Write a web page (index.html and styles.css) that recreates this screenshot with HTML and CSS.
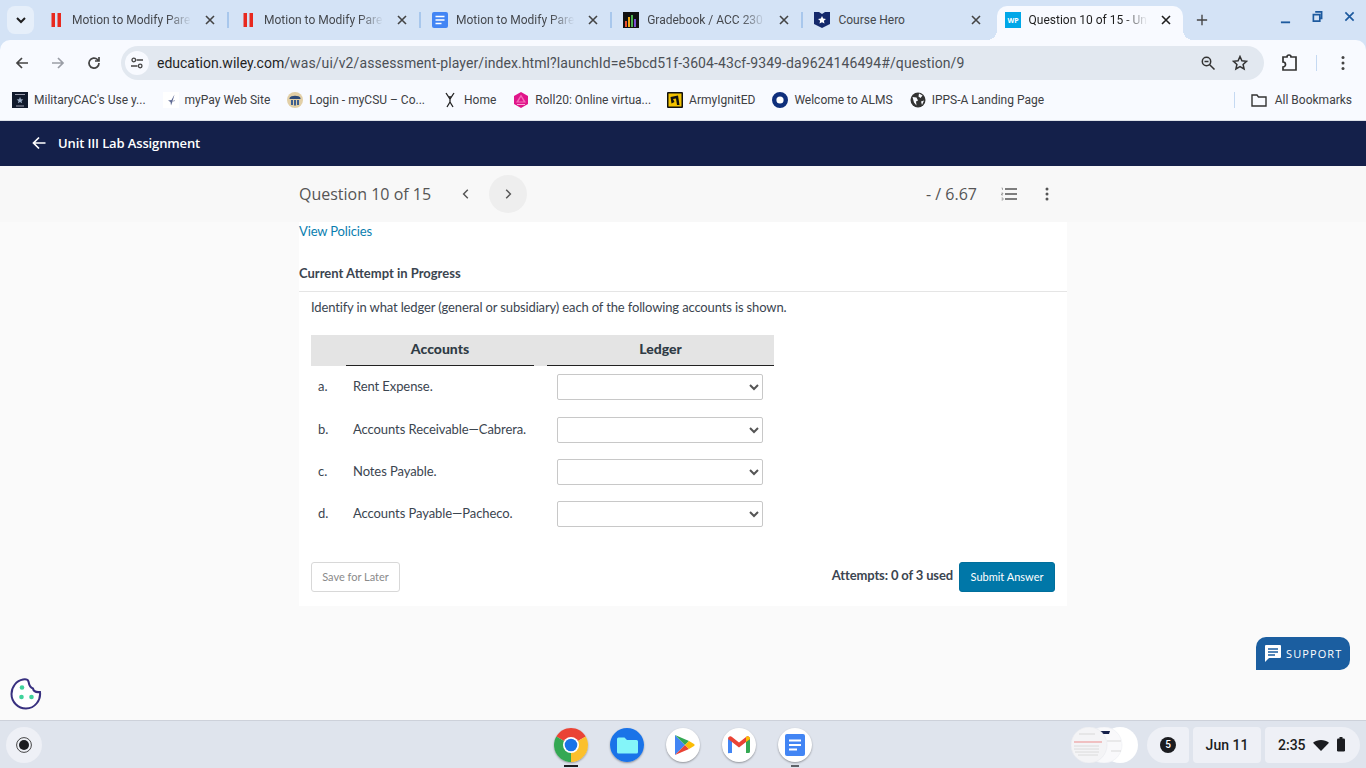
FILE: index.html
```html
<!DOCTYPE html>
<html lang="en">
<head>
    <meta charset="UTF-8">
    <meta name="viewport" content="width=device-width, initial-scale=1.0">
    <title>Question 10 of 15 - Unit III Lab Assignment</title>
    <link rel="stylesheet" href="styles.css">
</head>
<body>
    <div class="tabstrip">
        <button class="tab-search">
            <svg width="12" height="12" viewBox="0 0 12 12"><path d="M2 4l4 4 4-4" fill="none" stroke="#1f1f1f" stroke-width="2"/></svg>
        </button>
        <div class="tab tab-wide">
            <svg class="favicon" viewBox="0 0 16 16"><rect x="3.500" y="1" width="3.500" height="14" fill="#e8291f"/><rect x="9.500" y="1" width="3.500" height="14" fill="#e8291f"/></svg>
            <span class="tab-title">Motion to Modify Pare</span>
            <svg class="tab-close" viewBox="0 0 16 16"><path d="M4 4l8 8M12 4l-8 8" stroke="#444" stroke-width="1.600"/></svg>
        </div>
        <div class="tab tab-wide">
            <svg class="favicon" viewBox="0 0 16 16"><rect x="3.500" y="1" width="3.500" height="14" fill="#e8291f"/><rect x="9.500" y="1" width="3.500" height="14" fill="#e8291f"/></svg>
            <span class="tab-title">Motion to Modify Pare</span>
            <svg class="tab-close" viewBox="0 0 16 16"><path d="M4 4l8 8M12 4l-8 8" stroke="#444" stroke-width="1.600"/></svg>
        </div>
        <div class="tab">
            <svg class="favicon" viewBox="0 0 16 16"><rect width="16" height="16" rx="2" fill="#4285f4"/><path d="M3.500 4.500h9M3.500 8h9M3.500 11.500h6" stroke="#fff" stroke-width="1.600"/></svg>
            <span class="tab-title">Motion to Modify Pare</span>
            <svg class="tab-close" viewBox="0 0 16 16"><path d="M4 4l8 8M12 4l-8 8" stroke="#444" stroke-width="1.600"/></svg>
        </div>
        <div class="tab">
            <svg class="favicon" viewBox="0 0 16 16"><rect width="16" height="16" fill="#111"/><rect x="2" y="9" width="2" height="6" fill="#e94f2e"/><rect x="5" y="5" width="2" height="10" fill="#f3a712"/><rect x="8" y="3" width="2" height="12" fill="#4caf50"/><rect x="11" y="7" width="2" height="8" fill="#7a4fd0"/></svg>
            <span class="tab-title">Gradebook / ACC 230</span>
            <svg class="tab-close" viewBox="0 0 16 16"><path d="M4 4l8 8M12 4l-8 8" stroke="#444" stroke-width="1.600"/></svg>
        </div>
        <div class="tab tab-plain">
            <svg class="favicon" viewBox="0 0 16 16"><path d="M0 0h5l3 2 3-2h5v12l-8 4-8-4z" fill="#14296b"/><path d="M8 4l1.200 2.600 2.800.3-2.100 1.900.6 2.800L8 10.200l-2.500 1.400.6-2.800L4 6.900l2.800-.3z" fill="#fff"/></svg>
            <span class="tab-title">Course Hero</span>
            <svg class="tab-close" viewBox="0 0 16 16"><path d="M4 4l8 8M12 4l-8 8" stroke="#444" stroke-width="1.600"/></svg>
        </div>
        <div class="tab tab-active">
            <svg class="favicon" viewBox="0 0 16 16"><rect width="16" height="16" fill="#00a7e8"/><text x="8" y="11" class="wp-mark" text-anchor="middle">WP</text></svg>
            <span class="tab-title">Question 10 of 15 - Un</span>
            <svg class="tab-close" viewBox="0 0 16 16"><path d="M4 4l8 8M12 4l-8 8" stroke="#1f1f1f" stroke-width="1.600"/></svg>
        </div>
        <svg class="new-tab" viewBox="0 0 14 14"><path d="M7 1v12M1 7h12" stroke="#444" stroke-width="1.600"/></svg>
        <div class="window-controls">
            <svg class="win-min" viewBox="0 0 12 12"><path d="M1 8h10" stroke="#1d5a9e" stroke-width="2"/></svg>
            <svg class="win-btn" viewBox="0 0 12 12"><path d="M3.500 1h7v7h-2M1.500 4h7v7h-7z" fill="none" stroke="#1d5a9e" stroke-width="1.800"/></svg>
            <svg class="win-btn" viewBox="0 0 12 12"><path d="M1.500 1.500l9 9M10.500 1.500l-9 9" stroke="#1d5a9e" stroke-width="1.800"/></svg>
        </div>
    </div>

    <div class="toolbar">
        <svg class="nav-icon" viewBox="0 0 16 16"><path d="M14 8H3M8 3L3 8l5 5" fill="none" stroke="#444" stroke-width="1.700"/></svg>
        <svg class="nav-icon" viewBox="0 0 16 16"><path d="M2 8h11M8 3l5 5-5 5" fill="none" stroke="#9a9ea6" stroke-width="1.700"/></svg>
        <svg class="nav-icon" viewBox="0 0 16 16"><path d="M13 8a5 5 0 1 1-1.500-3.500L13 6M13 2v4H9" fill="none" stroke="#444" stroke-width="1.700"/></svg>
        <div class="omnibox">
            <span class="site-info">
                <svg width="14" height="14" viewBox="0 0 14 14"><path d="M6.500 4H13M1 10h6.500" stroke="#444" stroke-width="1.500"/><circle cx="3.800" cy="4" r="1.800" fill="none" stroke="#444" stroke-width="1.300"/><circle cx="10.200" cy="10" r="1.800" fill="none" stroke="#444" stroke-width="1.300"/></svg>
            </span>
            <span class="url"><span class="url-host">education.wiley.com</span>/was/ui/v2/assessment-player/index.html?launchId=e5bcd51f-3604-43cf-9349-da9624146494#/question/9</span>
            <svg class="omni-icon" viewBox="0 0 16 16"><circle cx="6.500" cy="6.500" r="4.200" fill="none" stroke="#333" stroke-width="1.500"/><path d="M9.700 9.700L14.500 14.500M4.500 6.500h4" stroke="#333" stroke-width="1.500"/></svg>
            <svg class="omni-icon" viewBox="0 0 16 16"><path d="M8 1.500l1.900 4.300 4.600.5-3.400 3.100 1 4.600L8 11.700l-4.100 2.300 1-4.600L1.500 6.300l4.600-.5z" fill="none" stroke="#333" stroke-width="1.500"/></svg>
        </div>
        <svg class="ext-icon" viewBox="0 0 18 18"><path d="M3 3h4a2 2 0 0 1 4 0h5v13H3v-3a2.500 2.500 0 0 0 0-5z" fill="none" stroke="#333" stroke-width="1.700"/></svg>
        <span class="toolbar-sep"></span>
        <svg class="menu-icon" viewBox="0 0 4 16"><circle cx="2" cy="2.500" r="1.500" fill="#444"/><circle cx="2" cy="8" r="1.500" fill="#444"/><circle cx="2" cy="13.500" r="1.500" fill="#444"/></svg>
    </div>

    <div class="bookmarks">
        <span class="bookmark">
            <svg class="favicon" viewBox="0 0 16 16"><rect width="16" height="16" fill="#111a2c"/><path d="M8 5l1 2.300 2.300.2-1.800 1.500.6 2.300L8 10l-2.100 1.300.6-2.300-1.800-1.500 2.300-.2z" fill="#9fb0c8"/><path d="M3 2.500h10M4 14h8" stroke="#aab" stroke-width=".9"/></svg>
            MilitaryCAC's Use y...
        </span>
        <span class="bookmark">
            <svg class="favicon" viewBox="0 0 16 16"><rect width="16" height="16" fill="#fff"/><path d="M11.500 2.500L8.500 8l-3.500.5 2.500 1.500 .5 3.500 1.500-4z" fill="#5f6a94"/><path d="M9 9.500l3-1" stroke="#a8adc2"/></svg>
            myPay Web Site
        </span>
        <span class="bookmark">
            <svg class="favicon" viewBox="0 0 16 16"><circle cx="8" cy="8" r="8" fill="#e2cfa6"/><path d="M2.500 6C3.500 3 12.500 3 13.500 6v1h-11z" fill="#2e4b78"/><path d="M4 8h2v5H4zM7 8h2v5.500H7zM10 8h2v5h-2z" fill="#3f5f90"/></svg>
            Login - myCSU – Co...
        </span>
        <span class="bookmark">
            <svg class="favicon" viewBox="0 0 16 16"><path d="M4 1l4 6 4-6M8 7v3M8 10l-3 5M8 10l3 5" fill="none" stroke="#222" stroke-width="1.300"/><circle cx="8" cy="5" r="1" fill="#222"/></svg>
            Home
        </span>
        <span class="bookmark">
            <svg class="favicon" viewBox="0 0 16 16"><path d="M8 0l7 4v8l-7 4-7-4V4z" fill="#e0158a"/><path d="M8 2.500l5 8H3z" fill="#f56ab8"/><path d="M8 5l2.500 4.500h-5z" fill="#e0158a"/><path d="M4 12.500h8" stroke="#f9a8d4"/></svg>
            Roll20: Online virtua...
        </span>
        <span class="bookmark">
            <svg class="favicon" viewBox="0 0 16 16"><rect width="16" height="16" rx="1" fill="#111"/><rect x="1.500" y="1.500" width="13" height="13" fill="#f2c200"/><path d="M3.500 5L11 3.500 12.500 13H10L9 6.500 6 7l1.500 3-3 1.500z" fill="#111"/></svg>
            ArmyIgnitED
        </span>
        <span class="bookmark">
            <svg class="favicon" viewBox="0 0 16 16"><circle cx="8" cy="8" r="5.800" fill="#fff" stroke="#0f2f7c" stroke-width="4.400"/></svg>
            Welcome to ALMS
        </span>
        <span class="bookmark">
            <svg class="favicon" viewBox="0 0 16 16"><circle cx="8" cy="8" r="7.500" fill="#333"/><path d="M2.500 5l4 .5 1.500 3-2 1 .5 4-2.500-3zM9 1.500l3.500 2-2 2.500-2-1.500zM11 9.500l3-1-2 4.500z" fill="#f8faff"/></svg>
            IPPS-A Landing Page
        </span>
        <span class="all-bookmarks">
            <svg class="favicon" viewBox="0 0 16 16"><path d="M1 3h5l1.500 2H15v9H1z" fill="none" stroke="#333" stroke-width="1.400"/></svg>
            All Bookmarks
        </span>
    </div>

    <header class="app-header">
        <svg width="14" height="14" viewBox="0 0 14 14"><path d="M13.500 7H1.500M7 1.500L1.500 7 7 12.500" fill="none" stroke="#fff" stroke-width="1.700"/></svg>
        <span>Unit III Lab Assignment</span>
    </header>

    <main class="page">
        <div class="column">
            <div class="question-bar">
                <span class="question-title">Question 10 of 15</span>
                <svg class="chevron chevron-prev" viewBox="0 0 10 10"><path d="M6.500 1.500L3 5l3.500 3.500" fill="none" stroke="#555" stroke-width="1.200"/></svg>
                <span class="next-btn">
                    <svg class="chevron" viewBox="0 0 10 10"><path d="M3.500 1.500L7 5 3.500 8.500" fill="none" stroke="#555" stroke-width="1.200"/></svg>
                </span>
                <span class="score">- / 6.67</span>
                <svg class="list-icon" viewBox="0 0 16 14"><path d="M4 2h12M4 7h12M4 12h12" stroke="#555" stroke-width="1.400"/><path d="M0.500 1h1v2M0.500 6h1.300v1H.5v1h1.500M0.500 11h1.500v2H.5" fill="none" stroke="#777" stroke-width=".6"/></svg>
                <svg class="dots-icon" viewBox="0 0 4 14"><circle cx="2" cy="2" r="1.500" fill="#555"/><circle cx="2" cy="7" r="1.500" fill="#555"/><circle cx="2" cy="12" r="1.500" fill="#555"/></svg>
            </div>

            <section class="card">
                <a class="policies">View Policies</a>
                <h2 class="attempt-title">Current Attempt in Progress</h2>
                <div class="question-body">
                    <p class="prompt">Identify in what ledger (general or subsidiary) each of the following accounts is shown.</p>
                    <table class="ledger">
                        <thead>
                            <tr>
                                <th class="col-letter"></th>
                                <th class="col-account"><span>Accounts</span></th>
                                <th class="col-gap"></th>
                                <th class="col-ledger"><span>Ledger</span></th>
                            </tr>
                        </thead>
                        <tbody>
                            <tr>
                                <td class="letter">a.</td>
                                <td>Rent Expense.</td>
                                <td></td>
                                <td class="cell-select"><select></select></td>
                            </tr>
                            <tr>
                                <td class="letter">b.</td>
                                <td>Accounts Receivable—Cabrera.</td>
                                <td></td>
                                <td class="cell-select"><select></select></td>
                            </tr>
                            <tr>
                                <td class="letter">c.</td>
                                <td>Notes Payable.</td>
                                <td></td>
                                <td class="cell-select"><select></select></td>
                            </tr>
                            <tr>
                                <td class="letter">d.</td>
                                <td>Accounts Payable—Pacheco.</td>
                                <td></td>
                                <td class="cell-select"><select></select></td>
                            </tr>
                        </tbody>
                    </table>
                    <div class="actions">
                        <button class="btn-save">Save for Later</button>
                        <span class="attempts">Attempts: 0 of 3 used</span>
                        <button class="btn-submit">Submit Answer</button>
                    </div>
                </div>
            </section>
        </div>

        <svg class="cookie" viewBox="0 0 32 32">
            <path d="M13 1.500c3-.5 5 .5 5.500 2 .5 3 1 6 4.500 7 .5 3 3 4 7 3.500 1 8-5 16.500-14 16.500C8 30.500 1.500 24 1.500 16 1.500 9 6.500 2.500 13 1.500z" fill="#fff" stroke="#38307f" stroke-width="2"/>
            <circle cx="12" cy="9.500" r="2.300" fill="#3fd29b"/>
            <circle cx="11.500" cy="19" r="2.300" fill="#3fd29b"/>
            <circle cx="21.500" cy="19" r="2.300" fill="#3fd29b"/>
        </svg>
        <div class="support">
            <svg width="18" height="18" viewBox="0 0 18 18"><path d="M2 1h14a1 1 0 0 1 1 1v11a1 1 0 0 1-1 1H5l-4 4V2a1 1 0 0 1 1-1z" fill="#fff"/><path d="M4 5h10M4 8h10M4 11h7" stroke="#1b5ea0" stroke-width="1.300"/></svg>
            <span>SUPPORT</span>
        </div>
    </main>

    <footer class="shelf">
        <div class="shelf-left">
            <span class="launcher">
                <svg width="16" height="16" viewBox="0 0 16 16"><circle cx="8" cy="8" r="7.400" fill="none" stroke="#333" stroke-width=".9"/><circle cx="8" cy="8" r="5" fill="#1b1c20"/></svg>
            </span>
        </div>
        <div class="dock">
            <span class="dock-app dock-running">
                <svg viewBox="0 0 34 34">
                    <path d="M17 17L2.300 8.500A17 17 0 0 1 31.700 8.500z" fill="#ea4335"/>
                    <path d="M17 17L31.700 8.500A17 17 0 0 1 17 34z" fill="#fbc02d"/>
                    <path d="M17 17L17 34A17 17 0 0 1 2.300 8.500z" fill="#34a853"/>
                    <circle cx="17" cy="17" r="8" fill="#fff"/>
                    <circle cx="17" cy="17" r="6.300" fill="#1a73e8"/>
                </svg>
            </span>
            <span class="dock-app">
                <svg viewBox="0 0 34 34"><circle cx="17" cy="17" r="17" fill="#1a73e8"/><path d="M7 11a1.500 1.500 0 0 1 1.500-1.500h6l2.500 2.500h9.500A1.500 1.500 0 0 1 28 13.500V24a1.500 1.500 0 0 1-1.500 1.500h-18A1.500 1.500 0 0 1 7 24z" fill="#84f5f9"/></svg>
            </span>
            <span class="dock-app dock-white">
                <svg viewBox="0 0 34 34">
                    <path d="M9 7v20l10-10z" fill="#4285f4"/>
                    <path d="M9 7l10 10 4-4z" fill="#34a853"/>
                    <path d="M9 27l10-10 4 4z" fill="#ea4335"/>
                    <path d="M23 13l-4 4 4 4 5-3a1.200 1.200 0 0 0 0-2z" fill="#fbbc04"/>
                </svg>
            </span>
            <span class="dock-app dock-white">
                <svg viewBox="0 0 34 34">
                    <path d="M6 25V11l4-1v15H7.500A1.500 1.500 0 0 1 6 25z" fill="#4285f4"/>
                    <path d="M24 10l4 1v12.500A1.500 1.500 0 0 1 26.500 25H24z" fill="#34a853"/>
                    <path d="M6 11c0-2.500 2.500-3.500 4-2l7 5.500L24 9c1.500-1.500 4-.5 4 2l-4 3-7 5.500L10 14z" fill="#ea4335"/>
                    <path d="M24 9c1.500-1.500 4-.5 4 2l-4 3z" fill="#fbbc04"/>
                </svg>
            </span>
            <span class="dock-app dock-white dock-open">
                <svg viewBox="0 0 34 34"><rect x="7" y="6" width="20" height="22" rx="2" fill="#4285f4"/><path d="M11 12.500h12M11 17h12M11 21.500h8" stroke="#fff" stroke-width="2"/></svg>
            </span>
        </div>
        <div class="tray">
            <svg class="holding" viewBox="0 0 68 36">
                <circle cx="49" cy="18" r="18" fill="#fff"/>
                <circle cx="33" cy="18" r="18" fill="#f9f9fb" stroke="#eceef3" stroke-width=".6"/>
                <path d="M20 4h19l-1 3H21z" fill="#14204a"/>
                <path d="M36 14h14M40 24h10" stroke="#ccc" stroke-width=".7"/>
                <circle cx="18" cy="18" r="18" fill="#f4f4f6" stroke="#e8e9ee" stroke-width=".6"/>
                <path d="M3 15h28" stroke="#ec8d8d" stroke-width="1"/>
                <path d="M3 19h25M3 22h25M4 25h24M7 28h20" stroke="#d6d6d6" stroke-width=".8"/>
                <path d="M8 7h16" stroke="#ccc" stroke-width=".7"/>
            </svg>
            <span class="pill pill-count"><span class="count">5</span></span>
            <span class="pill pill-date">Jun 11</span>
            <span class="pill pill-time">
                2:35
                <svg width="16" height="12" viewBox="0 0 16 12"><path d="M0 3.800C4.500 0 11.500 0 16 3.800L8 12z" fill="#1b1c20"/></svg>
                <svg width="10" height="15" viewBox="0 0 10 15"><rect x="3.500" y="0" width="3" height="2" fill="#1b1c20"/><rect x="1" y="1.500" width="8" height="13" rx="1.200" fill="#1b1c20"/></svg>
            </span>
        </div>
    </footer>
</body>
</html>
```

FILE: styles.css
```css
* {
    box-sizing: border-box;
}

html, body {
    margin: 0;
    height: 768px;
    overflow: hidden;
}

body {
    display: flex;
    flex-direction: column;
    font-family: "Lato", sans-serif;
    background: #d4e3f6;
}

svg {
    flex: none;
    display: block;
}

.favicon {
    width: 16px;
    height: 16px;
}

/* tab strip */
.tabstrip {
    display: flex;
    align-items: stretch;
    height: 40px;
    padding-left: 7px;
    background: #d4e3f6;
}

.tab-search {
    display: flex;
    align-items: center;
    justify-content: center;
    width: 27px;
    height: 28px;
    margin: 6px 3px 0 0;
    padding: 0;
    border: 0;
    border-radius: 8px;
    background: #e6effa;
}

.tab {
    position: relative;
    display: flex;
    align-items: center;
    gap: 8px;
    width: 191.200px;
    padding: 0 11px;
    font: 12px "Roboto", sans-serif;
    color: #45484d;
}

.tab-wide {
    width: 192px;
}

.tab::after {
    content: "";
    position: absolute;
    right: 0;
    top: 12px;
    width: 2px;
    height: 16px;
    background: #a8c7ec;
}

.tab-plain::after {
    display: none;
}

.tab-title {
    flex: 1;
    white-space: nowrap;
}

.tab:not(.tab-plain) .tab-title {
    -webkit-mask-image: linear-gradient(to right, #000 78%, transparent 98%);
    mask-image: linear-gradient(to right, #000 78%, transparent 98%);
}

.tab-close {
    width: 16px;
    height: 16px;
}

.tab-active {
    width: 186px;
    margin: 6px 0 0 2px;
    padding: 0 9px 6px 8px;
    border-radius: 10px 10px 0 0;
    background: #f8faff;
    color: #1f1f1f;
}

.tab-active::before,
.tab-active::after {
    content: "";
    position: absolute;
    top: auto;
    bottom: 0;
    width: 10px;
    height: 10px;
}

.tab-active::before {
    left: -10px;
    background: radial-gradient(circle at 0 0, transparent 10px, #f8faff 10px);
}

.tab-active::after {
    right: -10px;
    background: radial-gradient(circle at 100% 0, transparent 10px, #f8faff 10px);
}

.wp-mark {
    font: bold 7px "Open Sans", sans-serif;
    fill: #fff;
}

.new-tab {
    width: 12px;
    height: 12px;
    margin: 14px 0 0 13px;
}

.window-controls {
    display: flex;
    gap: 21px;
    margin-left: auto;
    padding: 11px 11px 0 0;
}

.win-btn,
.win-min {
    width: 11px;
    height: 11px;
}

.win-min {
    margin-top: 4px;
}

/* toolbar */
.toolbar {
    display: flex;
    align-items: center;
    height: 40px;
    padding: 5px 0 0 14px;
    border-radius: 10px 10px 0 0;
    background: #f8faff;
}

.nav-icon {
    width: 16px;
    height: 16px;
    margin-right: 20px;
}

.omnibox {
    display: flex;
    align-items: center;
    width: 1143px;
    height: 34px;
    margin-left: -1px;
    padding: 0 16px 0 4px;
    border-radius: 17px;
    background: #e2e8f0;
}

.site-info {
    display: flex;
    align-items: center;
    justify-content: center;
    width: 24px;
    height: 24px;
    margin-right: 8px;
    border-radius: 50%;
    background: #f8faff;
}

.url {
    flex: 1;
    font: 14px "Roboto", sans-serif;
    letter-spacing: 0.090px;
    white-space: nowrap;
    color: #4c5056;
}

.url-host {
    letter-spacing: 0;
    color: #1f1f1f;
}

.omni-icon {
    width: 16px;
    height: 16px;
    margin-left: 16px;
}

.ext-icon {
    width: 18px;
    height: 18px;
    margin-left: 16px;
}

.toolbar-sep {
    width: 1px;
    height: 16px;
    margin-left: 18px;
    background: #c5d9f2;
}

.menu-icon {
    width: 4px;
    height: 16px;
    margin-left: 24px;
}

/* bookmarks */
.bookmarks {
    display: flex;
    align-items: center;
    gap: 17px;
    height: 41px;
    padding: 0 14px 1px 12px;
    font: 12px "Roboto", sans-serif;
    color: #3d4043;
    border-bottom: 1px solid #dde1e8;
    background: #f8faff;
}

.bookmark,
.all-bookmarks {
    display: flex;
    align-items: center;
    gap: 6px;
    white-space: nowrap;
}

.bookmark:nth-child(6) {
    margin-left: -1px;
}

.all-bookmarks {
    gap: 8px;
    margin-left: auto;
    padding-left: 16px;
    border-left: 1px solid #c5d9f2;
}

/* app header */
.app-header {
    display: flex;
    align-items: center;
    gap: 12px;
    height: 45px;
    padding: 0 0 1px 32px;
    background: #14204a;
    color: #fff;
    font: 600 13px "Open Sans", sans-serif;
    letter-spacing: -0.130px;
}

/* page */
.page {
    position: relative;
    flex: 1;
    background: linear-gradient(#f8f8f8 56px, #fafafa 56px);
}

.column {
    width: 768px;
    margin-left: 299px;
}

.question-bar {
    display: flex;
    align-items: center;
    height: 56px;
    padding-bottom: 1px;
    font-family: "Open Sans", sans-serif;
    color: #555;
}

.question-title {
    font-size: 16px;
}

.chevron {
    width: 12px;
    height: 12px;
}

.chevron-prev {
    margin-left: 29px;
}

.next-btn {
    display: flex;
    align-items: center;
    justify-content: center;
    width: 38px;
    height: 38px;
    margin-left: 17px;
    border-radius: 50%;
    background: #eeeeee;
}

.score {
    margin-left: auto;
    font-size: 16px;
}

.list-icon {
    width: 16px;
    height: 14px;
    margin-left: 24px;
}

.dots-icon {
    width: 4px;
    height: 14px;
    margin: 0 18px 0 28px;
}

.card {
    height: 384px;
    background: #fff;
    color: #3b4550;
}

.policies {
    display: block;
    font-size: 13px;
    letter-spacing: -0.140px;
    line-height: 18px;
    color: #0a7eaf;
}

.attempt-title {
    height: 29px;
    margin: 23px 0 0;
    padding-bottom: 8px;
    border-bottom: 1px solid #e5e5e5;
    font-size: 13px;
    line-height: 20px;
    font-weight: 700;
}

.question-body {
    padding: 5px 12px 0;
    font-size: 13px;
}

.prompt {
    margin: 0 0 18px;
    line-height: 20px;
    letter-spacing: -0.140px;
}

.ledger {
    width: 463px;
    border-collapse: collapse;
    table-layout: fixed;
}

.ledger th {
    height: 31px;
    padding: 0 0 5px;
    background: #e4e4e4;
    font-size: 14px;
    font-weight: 900;
    color: #2f3b45;
    box-shadow: inset 0 -1px #222;
}

.ledger .col-letter {
    width: 35px;
    box-shadow: none;
}

.ledger .col-account {
    width: 188px;
}

.ledger .col-gap {
    width: 13px;
    box-shadow: none;
}

.ledger td {
    height: 42.400px;
    padding: 0 0 2px 7px;
    letter-spacing: -0.080px;
    white-space: nowrap;
}

.ledger .cell-select {
    padding: 0 0 0 10px;
}

.ledger select {
    display: block;
    width: 206px;
    height: 26px;
    border: 1px solid #c8c8c8;
    border-radius: 2px;
    background: #fff;
    color: #555;
}

.actions {
    display: flex;
    align-items: flex-start;
    margin-top: 26px;
}

.btn-save,
.btn-submit {
    height: 30px;
    padding: 0;
    border-radius: 3px;
    font: 11px "Lato", sans-serif;
}

.btn-save {
    width: 89px;
    border: 1px solid #d8d8d8;
    background: #fff;
    color: #8a8a8a;
}

.attempts {
    margin: 5px 6px 0 auto;
    font-size: 13px;
    font-weight: 700;
    letter-spacing: -0.140px;
    line-height: 16px;
}

.btn-submit {
    width: 96px;
    border: 1px solid #006f9c;
    background: #0077a8;
    color: #fff;
}

.cookie {
    position: absolute;
    left: 10px;
    top: 512px;
    width: 32px;
    height: 32px;
}

.support {
    position: absolute;
    right: 16px;
    top: 471px;
    display: flex;
    align-items: center;
    gap: 4px;
    width: 94px;
    height: 33px;
    padding: 0 0 1px 8px;
    border-radius: 10px 10px 10px 0;
    background: #1b5ea0;
    color: #fff;
    font: 11px "Open Sans", sans-serif;
    letter-spacing: 1.100px;
}

/* shelf */
.shelf {
    display: grid;
    grid-template-columns: 1fr auto 1fr;
    align-items: center;
    height: 48px;
    border-top: 1px solid #cdd1da;
    background: #dfe4ed;
}

.shelf-left {
    padding-left: 6px;
}

.launcher {
    display: flex;
    align-items: center;
    justify-content: center;
    width: 36px;
    height: 36px;
    border-radius: 50%;
    background: #eef0f6;
}

.dock {
    display: flex;
    gap: 22px;
}

.dock-app {
    position: relative;
    width: 34px;
    height: 34px;
    border-radius: 50%;
    box-shadow: 0 1px 2px rgba(0, 0, 0, 0.35);
}

.dock-white {
    background: #fff;
}

.dock-running::after,
.dock-open::after {
    content: "";
    position: absolute;
    left: 10px;
    bottom: -5px;
    width: 14px;
    height: 2px;
    background: #1b1c20;
}

.dock-open::after {
    left: 13px;
    width: 8px;
    background: #5f6368;
}

.tray {
    display: flex;
    align-items: center;
    justify-content: flex-end;
    gap: 4px;
    padding-right: 6px;
}

.holding {
    width: 68px;
    height: 36px;
    margin-right: 4px;
}

.pill {
    display: flex;
    align-items: center;
    justify-content: center;
    height: 36px;
    background: #eef0f6;
    border-radius: 4px;
    font: 500 14px "Roboto", sans-serif;
    color: #1b1c20;
}

.pill-count {
    width: 42px;
    border-radius: 18px 4px 4px 18px;
}

.count {
    display: flex;
    align-items: center;
    justify-content: center;
    width: 16px;
    height: 16px;
    border-radius: 50%;
    background: #1b1c20;
    color: #fff;
    font-size: 10px;
}

.pill-date {
    width: 68px;
}

.pill-time {
    justify-content: flex-start;
    gap: 7px;
    width: 95px;
    padding-left: 13px;
    border-radius: 4px 18px 18px 4px;
}
```
